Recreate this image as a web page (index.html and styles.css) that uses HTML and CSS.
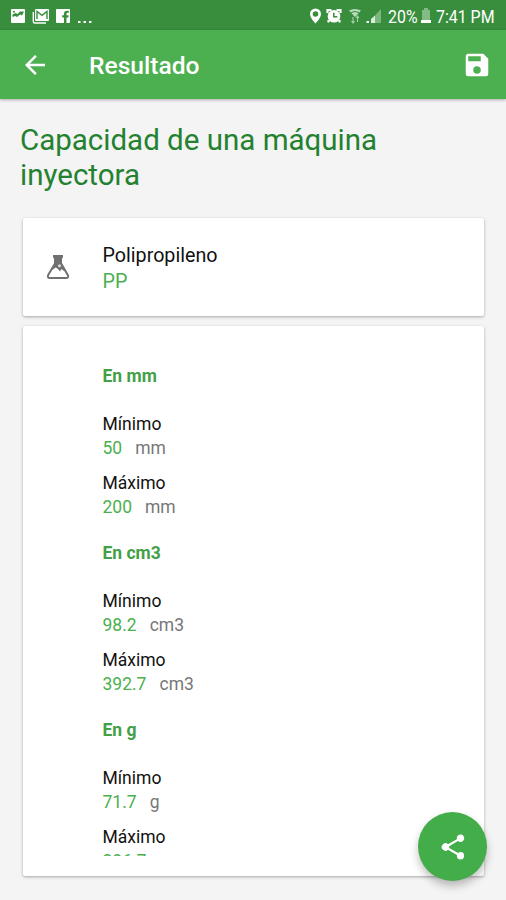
FILE: index.html
```html
<!DOCTYPE html>
<html lang="es">
<head>
<meta charset="utf-8">
<title>Resultado</title>
<link rel="stylesheet" href="styles.css">
</head>
<body>
<div class="screen">
  <div class="status">
    <svg class="status-left" width="94" height="30" viewBox="0 0 94 30">
      <path fill="#fff" d="M12 9h12q1 0 1 1v12q0 1-1 1H12q-1 0-1-1V10q0-1 1-1z"/>
      <path fill="#388e3c" d="M12.500 17v-2.500l3-1.500 2 1 2.500-2.500h4l-2 4-2-1-3 2.500-2-1z"/>
      <path fill="#388e3c" d="M13 11h2v1.500h-2z"/>
      <path fill="#fff" d="M36 9h12q1 0 1 1v10q0 1-1 1H36q-1 0-1-1V10q0-1 1-1z"/>
      <path d="M33.300 12v9.500q0 1.500 1.500 1.500H46" fill="none" stroke="#fff" stroke-width="1.400"/>
      <path d="M37 19v-7.500l5 3.800 5-3.800V19" fill="none" stroke="#388e3c" stroke-width="1.400"/>
      <path fill="#fff" d="M57 9h12q1 0 1 1v12q0 1-1 1h-2.500v-5.500h2v-2.200h-2v-1.500q0-1 1-1h1.300v-2H67q-3 0-3 3v1.500h-1.800v2.200H64V23h-7q-1 0-1-1V10q0-1 1-1z"/>
      <path fill="#fff" d="M78 21h2.500v2H78zM83.500 21H86v2h-2.500zM89 21h2.500v2H89z"/>
    </svg>
    <svg class="status-right" width="76" height="30" viewBox="0 0 76 30">
      <path fill="#fff" fill-rule="evenodd" d="M7.500 8.500a5.500 5.500 0 0 0-5.500 5.500c0 4 5.500 9.500 5.500 9.500s5.500-5.500 5.500-9.500a5.500 5.500 0 0 0-5.500-5.500zm0 2.700a2.800 2.800 0 1 1 0 5.600 2.800 2.800 0 0 1 0-5.600z"/>
      <circle cx="26" cy="16.200" r="6.300" fill="#fff"/>
      <path d="M19.500 13v-3h4M28.500 10h4v3M20.500 20v2.500M31.500 20v2.500" fill="none" stroke="#fff" stroke-width="2.200"/>
      <path d="M25.800 12.800v4h3.500" fill="none" stroke="#388e3c" stroke-width="1.500"/>
      <path d="M41 10.500q6-3 12 0L47 17z" fill="#b9dcbb"/>
      <path d="M43 12.500q4-2 8 0" fill="none" stroke="#388e3c"/>
      <path d="M45 17v6M49.500 16v6M43.500 21l1.500 2 1.500-2M48 18l1.500-2 1.500 2" fill="none" stroke="#a8d0aa" stroke-width="1.100"/>
      <path d="M58.500 21H61v2h-2.500z" fill="#fff"/>
      <path d="M63 19l4-3.500V23h-4z" fill="#d9eeda"/>
      <path d="M67 15.500l6-6.500v14h-6z" fill="#7cb77f"/>
    </svg>
    <span class="cond pct">20%</span>
    <svg class="battery" width="10" height="30" viewBox="0 0 10 30"><path d="M3 8h4v2h2v10H1V10h2z" fill="#82bb84"/><path d="M0 20h10v3H0z" fill="#fff"/></svg>
    <span class="cond time">7:41 PM</span>
  </div>
  <header class="bar">
    <svg class="back" width="30" height="30" viewBox="0 0 24 24"><path fill="#fff" d="M20 11H7.830l5.590-5.590L12 4l-8 8 8 8 1.410-1.410L7.830 13H20v-2z"/></svg>
    <h1>Resultado</h1>
    <svg class="save" width="30" height="30" viewBox="0 0 24 24"><path fill="#fff" d="M17 3H5a2 2 0 0 0-2 2v14a2 2 0 0 0 2 2h14a2 2 0 0 0 2-2V7l-4-4zm-5 16a3 3 0 1 1 0-6 3 3 0 0 1 0 6zm3-10H5V5h10v4z"/></svg>
  </header>
  <main>
    <h2>Capacidad de una máquina inyectora</h2>
    <section class="card material">
      <svg class="flask" width="26" height="28" viewBox="0 0 26 28">
        <path d="M10 3.500v7L3.200 22q-1.200 3 1.800 3h16q3 0 1.800-3L16 10.500v-7" fill="none" stroke="#707070" stroke-width="2"/>
        <path d="M8 2h10v2.500l-1.200 1V10l4.200 7.500-2 .5-2.500-2-1.500 2.500-2.500-3-2-1-3 2.500 1.800-6V5.500L8 4.500z" fill="#707070"/>
        <circle cx="14.500" cy="12.800" r="1.500" fill="#ddd"/>
      </svg>
      <div class="info"><div class="name">Polipropileno</div><div class="code">PP</div></div>
    </section>
    <section class="card results">
      <div class="scroll">
        <h3>En mm</h3>
        <div class="row"><div class="label">Mínimo</div><div class="value">50<span>mm</span></div></div>
        <div class="row"><div class="label">Máximo</div><div class="value">200<span>mm</span></div></div>
        <h3>En cm3</h3>
        <div class="row"><div class="label">Mínimo</div><div class="value">98.2<span>cm3</span></div></div>
        <div class="row"><div class="label">Máximo</div><div class="value">392.7<span>cm3</span></div></div>
        <h3>En g</h3>
        <div class="row"><div class="label">Mínimo</div><div class="value">71.7<span>g</span></div></div>
        <div class="row"><div class="label">Máximo</div><div class="value">286.7</div></div>
      </div>
    </section>
  </main>
  <div class="fab"><svg width="30" height="30" viewBox="0 0 24 24"><path fill="#fff" d="M18 16.080c-.76 0-1.440.3-1.960.77L8.910 12.700c.05-.23.090-.46.090-.7s-.04-.47-.09-.7l7.050-4.110A3 3 0 1 0 15 5c0 .24.040.47.090.7L8.040 9.810A3 3 0 1 0 8.040 14.190l7.120 4.160c-.05.21-.08.430-.08.650A2.920 2.920 0 1 0 18 16.080z"/></svg></div>
</div>
</body>
</html>
```
FILE: styles.css
```css
* { box-sizing: border-box; }
body { margin: 0; font-family: Roboto, "Liberation Sans", sans-serif; }
h1, h2, h3 { margin: 0; }
svg { display: block; flex: none; }
.screen { position: relative; width: 506px; height: 900px; overflow: hidden; background: #f4f4f4; }
.status { display: flex; height: 30px; background: #388e3c; color: #fff; }
.status-right { margin-left: 214px; }
.cond { font-size: 18.3px; line-height: 34px; white-space: nowrap; transform: scaleX(.87); transform-origin: 0 0; }
.pct { width: 32px; margin-left: 4px; }
.battery { margin-left: 1px; }
.time { margin-left: 5px; }
.bar { position: relative; display: flex; align-items: center; height: 69px; padding: 0 14px 0 20px; background: #4caf50; color: #fff; box-shadow: 0 1px 3px rgba(0,0,0,.3); }
h1 { flex: 1; margin-left: 39px; padding-top: 2px; font-size: 24.6px; font-weight: 500; line-height: 30px; }
main { padding: 24px 22px 0 23px; }
h2 { margin-left: -3px; height: 95px; font-size: 29.5px; font-weight: 400; line-height: 35px; color: #238130; }
.card { background: #fff; border-radius: 2px; box-shadow: 0 1px 3px rgba(0,0,0,.32); }
.material { display: flex; height: 98px; padding-left: 22px; }
.flask { margin-top: 35px; }
.info { margin-left: 31.5px; padding-top: 24px; }
.name, .code { font-size: 19.7px; line-height: 27px; color: #111; }
.code { margin-top: -1px; color: #4caf50; }
.results { height: 550px; margin-top: 10px; padding: 39px 0 0 79px; }
.scroll { height: 491px; padding-left: .5px; overflow: hidden; }
h3 { height: 47px; font-size: 17.5px; font-weight: 700; line-height: 23px; color: #43a047; }
.row { height: 59px; font-size: 17.5px; line-height: 24px; }
.row + h3 { margin-top: 12px; }
.label { color: #111; }
.value { color: #4caf50; }
.value span { margin-left: 13px; color: #777; }
.fab { position: absolute; left: 418px; top: 812px; display: flex; align-items: center; justify-content: center; width: 69px; height: 69px; border-radius: 50%; background: #43ad4a; box-shadow: 0 5px 9px rgba(0,0,0,.25); }
```
